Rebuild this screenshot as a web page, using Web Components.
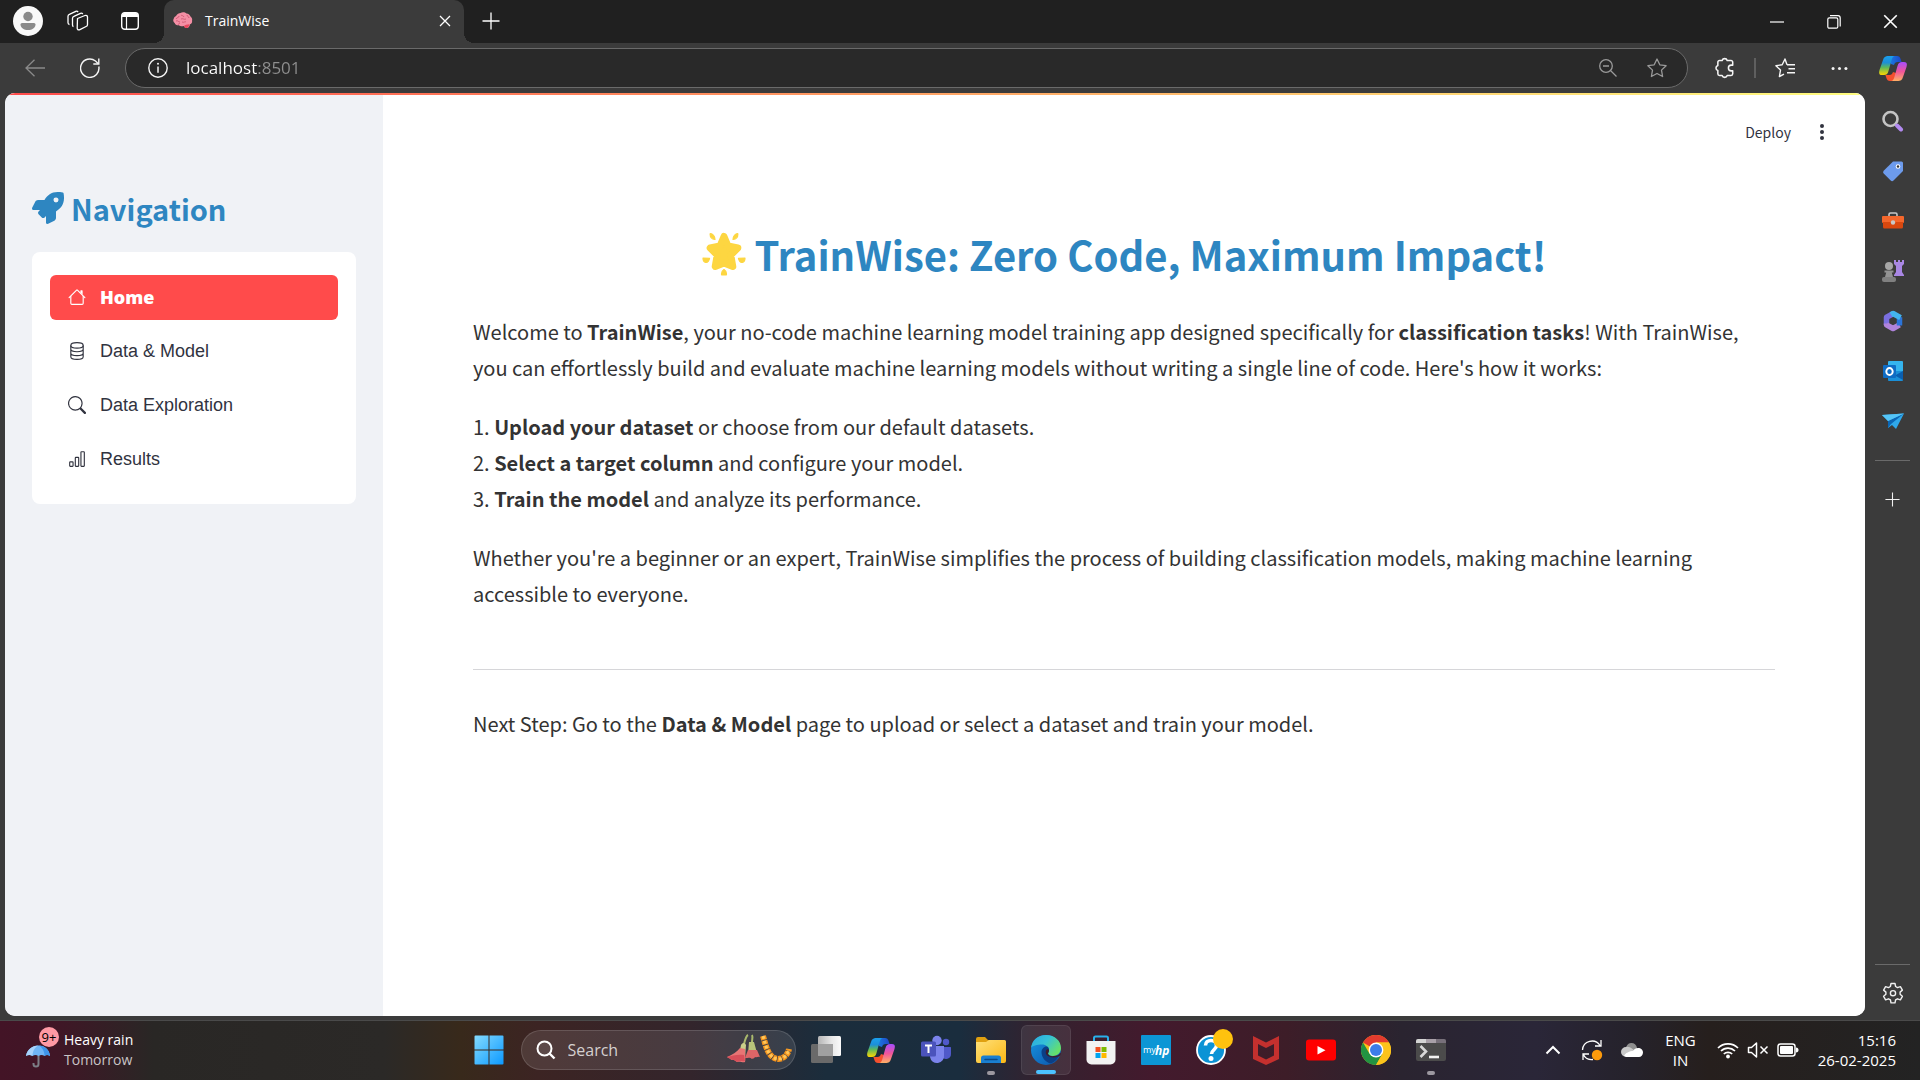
<!DOCTYPE html>
<html lang="en">
<head>
<meta charset="utf-8">
<title>TrainWise</title>
<style>
html, body { margin: 0; height: 100%; overflow: hidden; background: #3b3b3b; }
body { font-family: "Open Sans", "Noto Sans", sans-serif; }
</style>
</head>
<body>
<desktop-screen></desktop-screen>
<script>
const COPILOT = `<defs>
<linearGradient id="a" x1="0" y1="0" x2="0" y2="1"><stop offset="0" stop-color="#1aa0ee"/><stop offset=".35" stop-color="#1d8fd8"/><stop offset=".6" stop-color="#5cb85c"/><stop offset="1" stop-color="#ffd500"/></linearGradient>
<linearGradient id="b" x1="0" y1="0" x2="0" y2="1"><stop offset="0" stop-color="#a64dff"/><stop offset=".5" stop-color="#f0559a"/><stop offset="1" stop-color="#ffb066"/></linearGradient>
<linearGradient id="c" x1="0" y1="0" x2="1" y2="0"><stop offset="0" stop-color="#1b86e6"/><stop offset="1" stop-color="#1d47c8"/></linearGradient></defs>
<path fill="url(#c)" d="M8 1h10c2 0 3 1 3.600 3l1 3h-4c-2 0-3 1-3.600 3l-3-1z"/>
<path fill="#f4502e" d="M20 26H11c-2 0-3-1-3.600-3l-1-3h4c2 0 3-1 3.600-3l3 1z"/>
<path fill="url(#a)" d="M9 1h7c-2 0-2.800 2-3.400 4L9.500 16c-.8 3-2.300 4-4.500 4H3c-3 0-3.300-2-2.500-5L4 5c.9-3 2.500-4 5-4z"/>
<path fill="url(#b)" d="M19 26h-7c2 0 2.800-2 3.400-4l3.100-11c.8-3 2.300-4 4.500-4h2c3 0 3.300 2 2.500 5L24 22c-.9 3-2.500 4-5 4z"/>`;

/* name: [viewBox, markup]; outline icons take the current text colour */
const ICONS = {
  profile: ['0 0 30 30', '<circle cx="15" cy="15" r="15" fill="#f9f9f9"/><circle cx="15" cy="10.500" r="4.700" fill="#8a8a8a"/><path d="M9 17h12a1.500 1.500 0 0 1 1.500 1.500C22.500 22 19 24 15 24s-7.500-2-7.500-5.500A1.500 1.500 0 0 1 9 17z" fill="#8a8a8a"/>'],
  workspaces: ['0 0 22 22', '<g fill="none" stroke="currentColor" stroke-width="1.300" stroke-linejoin="round"><path d="M10.500 8.500 18 5.500c1.300-.4 2.500.3 2.500 1.600v7.400c0 1-.5 1.700-1.400 2l-6.700 3.300c-1.200.4-2.200-.3-2.200-1.500z"/><path d="M6.500 16.500c-.8-.2-1-.8-1-1.600V8.300c0-1 .5-1.700 1.400-2L13.500 3.300c1-.4 1.800 0 2.300.7M2.500 14.500c-.9-.2-1.500-.8-1.500-1.800V6.300c0-1 .5-1.700 1.400-2L8.800 1.300c1-.4 1.800 0 2.300.7"/></g>'],
  tabactions: ['0 0 18 18', '<rect x=".7" y=".7" width="16.600" height="16.600" rx="3" fill="none" stroke="currentColor" stroke-width="1.400"/><path d="M1 5V3.500A2.500 2.500 0 0 1 3.500 1h11A2.500 2.500 0 0 1 17 3.500V5z" fill="currentColor"/><path d="M5.500 5v12" stroke="currentColor" stroke-width="1.200"/>'],
  brain: ['0 0 20 17', '<path d="M3 4c1-2 3-3 4.500-3C9 0 12 0 13.500 1.500c2 0 3.500 1.500 4 3 1.500 1 2 3 1.500 4.500.5 1.500-.5 3-2 3.300-.2 2-1.500 4-3.500 3.700-1 0-2-.8-2.500-2C9 14.500 7 14.300 6 13.300 4 13.500 2 12.500 1.700 11 .2 10-.2 8 .8 6.500 1 5.500 2 4.500 3 4z" fill="#f48fa5"/><path d="M11 14c1-1 3-1.700 5.500-1.700-.2 2-1.500 4-3.500 3.700-1 0-2-.8-2-2z" fill="#e8485f"/><path d="M3 7c1-2 3-1 3-3m1 6c-2 0-2-2-4-1m5-6c1 1 2 0 3 2m-3 2c2-1 3 1 5 0m1-4c0 2 2 1 2 3m-7 4c2 1 3-1 4 0m-8 3c0-1 1-1 2-2" fill="none" stroke="#c9536d" stroke-width=".8"/>'],
  close: ['0 0 12 12', '<path d="M1 1l10 10M11 1L1 11" stroke="currentColor" stroke-width="1.300"/>'],
  plus: ['0 0 18 18', '<path d="M9 .5v17M.5 9h17" stroke="currentColor" stroke-width="1.300"/>'],
  minimize: ['0 0 14 14', '<path d="M0 7h14" stroke="currentColor" stroke-width="1.200"/>'],
  restore: ['0 0 14 14', '<rect x=".8" y="2.800" width="10" height="10.400" rx="1.500" fill="none" stroke="currentColor" stroke-width="1.200"/><path d="M3 .7h8A2.300 2.300 0 0 1 13.200 3v8.500" fill="none" stroke="currentColor" stroke-width="1.200"/>'],
  back: ['0 0 20 18', '<path d="M20 9H1M9.500.8 1 9l8.500 8.200" fill="none" stroke="currentColor" stroke-width="1.300"/>'],
  reload: ['0 0 20 20', '<path d="M18.800 8.500A9.200 9.200 0 1 1 15.500 3l2.800 2.700" fill="none" stroke="currentColor" stroke-width="1.400"/><path d="M18.800.5V6h-5.500" fill="none" stroke="currentColor" stroke-width="1.400"/>'],
  info: ['0 0 20 20', '<circle cx="10" cy="10" r="9.200" fill="none" stroke="currentColor" stroke-width="1.400"/><path d="M10 8.500v6.300" stroke="currentColor" stroke-width="1.500"/><circle cx="10" cy="5.700" r="1" fill="currentColor"/>'],
  zoomout: ['0 0 18 18', '<circle cx="7" cy="7" r="6.300" fill="none" stroke="currentColor" stroke-width="1.300"/><path d="M11.500 11.500l6 6M4 7h6" stroke="currentColor" stroke-width="1.300"/>'],
  star: ['0 0 20 20', '<path d="M10 1l2.800 5.800 6.300.9-4.600 4.400 1.100 6.400L10 15.500l-5.600 3 1.100-6.400L.9 7.700l6.300-.9z" fill="none" stroke="currentColor" stroke-width="1.300" stroke-linejoin="round"/>'],
  puzzle: ['0 0 20 20', '<path d="M3.500 4.700A1.500 1.500 0 0 1 5 3.200h2.400a2.400 2.400 0 0 1 4.600 0h3.500A1.500 1.500 0 0 1 17 4.700v2.700h-1.300a2.600 2.600 0 0 0 0 5.200H17v2.700a1.500 1.500 0 0 1-1.500 1.500H12a2.400 2.400 0 0 1-4.600 0H5a1.500 1.500 0 0 1-1.500-1.500v-3a2.400 2.400 0 0 1 0-4.600z" fill="none" stroke="currentColor" stroke-width="1.400" stroke-linejoin="round"/>'],
  favorites: ['0 0 20 20', '<path d="M12 6.700 10 1 7.200 6.800l-6.300.9 4.600 4.400-1.100 6.400L9 16.200M12 6.700h8M13.500 10.700H20M12 14.700h8M12.500 6.700h-.5" fill="none" stroke="currentColor" stroke-width="1.400" stroke-linejoin="round"/>'],
  more: ['0 0 18 18', '<circle cx="2.200" cy="9" r="1.600" fill="currentColor"/><circle cx="9" cy="9" r="1.600" fill="currentColor"/><circle cx="15.800" cy="9" r="1.600" fill="currentColor"/>'],
  copilot: ['0 0 28 27', COPILOT],
  kebab: ['0 0 6 18', '<g fill="#31333f"><circle cx="3" cy="3" r="2"/><circle cx="3" cy="9" r="2"/><circle cx="3" cy="15" r="2"/></g>'],
  lens: ['0 0 22 22', '<circle cx="8.500" cy="9" r="7" fill="none" stroke="#c4c4c4" stroke-width="2.600"/><path d="M15 15.500l4 4" stroke="#b28af0" stroke-width="4" stroke-linecap="round"/>'],
  tag: ['0 0 22 22', '<path d="M11 1.500h8.500A1.500 1.500 0 0 1 21 3v8L11.500 20.500a2 2 0 0 1-2.800 0l-7-7a2 2 0 0 1 0-2.800z" fill="#6d9bec"/><circle cx="16" cy="6.500" r="2.300" fill="#fff"/><circle cx="16" cy="6.500" r="1.200" fill="#333"/>'],
  toolbox: ['0 0 22 22', '<path d="M7 7V4.500A1.500 1.500 0 0 1 8.500 3h5A1.500 1.500 0 0 1 15 4.500V7" fill="none" stroke="#c8c8c8" stroke-width="1.600"/><rect x="0" y="6" width="22" height="7" rx="1" fill="#f4672c"/><path d="M1 12h20v5a1.500 1.500 0 0 1-1.500 1.500h-17A1.500 1.500 0 0 1 1 17z" fill="#d9480f"/><circle cx="11" cy="12.500" r="2.200" fill="#c8c8c8"/>'],
  chess: ['0 0 22 22', '<path d="M12 0h2v2h2V0h2v2h2V0h2v4l-2 2v6l2 3v1H12v-1l2-3V6l-2-2z" fill="#a987e4"/><circle cx="7" cy="6" r="4" fill="#a6a6a6"/><path d="M2.500 10.500h9v2H9.800L11 17H3l1.200-4.500H2.500z" fill="#939393"/><rect x="0" y="17" width="14" height="5" rx="2" fill="#808080"/>'],
  m365: ['0 0 22 22', '<g fill="none" stroke-width="5.500" stroke-linejoin="round"><path d="M11.500 3.500l-7 3.700v7.600" stroke="#7a6fe0"/><path d="M4.500 13.500v1.300L11 18.500l6.500-3.700" stroke="#b083dc"/><path d="M17.500 15.500V7.200" stroke="#2b74da"/><path d="M18.500 7.700 11 3.500l-2 1.200" stroke="#43b4ee"/></g>'],
  outlook: ['0 0 22 22', '<rect x="6" y="1" width="15" height="12" rx="1" fill="#35b4ee"/><path d="M6 11l15 0v9a1 1 0 0 1-1 1H7a1 1 0 0 1-1-1z" fill="#1a8fd8"/><path d="M21 11v9l-8-4.500z" fill="#0a5fb0"/><rect x="1" y="5" width="13" height="13" rx="1" fill="#0f6cc4"/><ellipse cx="7.500" cy="11.500" rx="3.200" ry="3.500" fill="none" stroke="#fff" stroke-width="1.900"/>'],
  plane: ['0 0 22 22', '<path d="M0 5 22 3.500 14 19l-4-4-4 3V11z" fill="#2fa8ea"/><path d="M6 11 22 3.500 9 14l-3 4z" fill="#0b66b5"/><path d="M0 5l22-1.500L6 11z" fill="#55c5f7"/>'],
  gear: ['0 0 22 22', '<path d="M9 1.500h4l.6 3 1.900 1.100 2.900-1 2 3.500-2.300 2v2.200l2.300 2-2 3.500-2.900-1-1.900 1.100-.6 3H9l-.6-3-1.900-1.100-2.900 1-2-3.500 2.300-2v-2.200l-2.300-2 2-3.500 2.900 1 1.900-1.100z" fill="none" stroke="currentColor" stroke-width="1.400" stroke-linejoin="round"/><circle cx="11" cy="11.200" r="2.600" fill="none" stroke="currentColor" stroke-width="1.400"/>'],
  rocket: ['0 0 512 512', '<path fill="currentColor" d="M505.120 19.094c-1.189-5.531-6.658-11-12.207-12.188C460.716 0 435.507 0 410.407 0 307.175 0 245.269 55.203 199.052 128H94.838c-16.348.016-35.557 11.875-42.887 26.484L2.516 253.297A28.400 28.400 0 0 0 0 264a24 24 0 0 0 24.006 24h103.810l-22.474 22.469c-11.365 11.361-12.996 32.258 0 45.250l50.904 50.906c11.156 11.188 32.156 13.156 45.277 0l22.475-22.469V488a24 24 0 0 0 24.006 24 28.559 28.559 0 0 0 10.707-2.516l98.728-49.391c14.629-7.297 26.508-26.500 26.508-42.859V312.797c72.598-46.313 128.035-108.406 128.035-211.094.093-25.203.093-50.406-6.862-82.609zM384.040 168a40 40 0 1 1 40.010-40 40.023 40.023 0 0 1-40.010 40z"/>'],
  house: ['0 0 16 16', '<path fill="currentColor" d="M2 13.500V7h1v6.500a.5.5 0 0 0 .5.5h9a.5.5 0 0 0 .5-.5V7h1v6.500a1.500 1.500 0 0 1-1.500 1.500h-9A1.500 1.500 0 0 1 2 13.500zm11-11V6l-2-2V2.500a.5.5 0 0 1 .5-.5h1a.5.5 0 0 1 .5.5z"/><path fill="currentColor" d="M7.293 1.500a1 1 0 0 1 1.414 0l6.647 6.646a.5.5 0 0 1-.708.708L8 2.207 1.354 8.854a.5.5 0 1 1-.708-.708z"/>'],
  database: ['0 0 16 16', '<g fill="none" stroke="currentColor"><ellipse cx="8" cy="3" rx="5.500" ry="2.400"/><path d="M2.500 3v10c0 1.300 2.500 2.400 5.500 2.400s5.500-1.100 5.500-2.400V3M2.500 6.300c0 1.300 2.500 2.400 5.500 2.400s5.500-1.100 5.500-2.400M2.500 9.700c0 1.300 2.500 2.400 5.500 2.400s5.500-1.100 5.500-2.400"/></g>'],
  search: ['0 0 16 16', '<path fill="currentColor" d="M11.742 10.344a6.500 6.500 0 1 0-1.397 1.398h-.001c.03.040.062.078.098.115l3.850 3.850a1 1 0 0 0 1.415-1.414l-3.850-3.850a1.007 1.007 0 0 0-.115-.1zM12 6.500a5.500 5.500 0 1 1-11 0 5.500 5.500 0 0 1 11 0z"/>'],
  chart: ['0 0 16 16', '<path fill="currentColor" d="M4 11H2v3h2v-3zm5-4H7v7h2V7zm5-5v12h-2V2h2zm-2-1a1 1 0 0 0-1 1v12a1 1 0 0 0 1 1h2a1 1 0 0 0 1-1V2a1 1 0 0 0-1-1h-2zM6 7a1 1 0 0 1 1-1h2a1 1 0 0 1 1 1v7a1 1 0 0 1-1 1H7a1 1 0 0 1-1-1V7zm-5 4a1 1 0 0 1 1-1h2a1 1 0 0 1 1 1v3a1 1 0 0 1-1 1H2a1 1 0 0 1-1-1v-3z"/>'],
  glow: ['0 0 44 44', '<g fill="#fdd641" stroke="#fdd641" stroke-linejoin="round"><path stroke-width="7" d="M22 4.500l4 9.500 9.800 2-7 7 2 11.500L22 31l-8.800 3.500 2-11.500-7-7 9.800-2z"/><path stroke-width="1" d="M10.500 1.500c2 0 4 2.500 4 6-2.300-.3-4.300-2.300-4-6zM33.500 1.500c-2 0-4 2.500-4 6 2.300-.3 4.300-2.300 4-6zM4.500 26l5.500.2c-.5 2.800-1.700 4.500-3.200 4.300-1.500-.3-2.300-2.500-2.300-4.500zM39.500 26l-5.500.2c.5 2.800 1.700 4.500 3.200 4.300 1.500-.3 2.300-2.500 2.300-4.500zM22 37.500c1.300 1 2.300 3.300 2 5.500h-4c-.3-2.200.7-4.500 2-5.500z" transform="translate(-4.400 0) scale(1.200 1)"/></g>'],
  umbrella: ['0 0 24 24', '<path d="M12.500 11v9a2.500 2.500 0 0 1-5 0v-1" fill="none" stroke="#7c7f86" stroke-width="2"/><path d="M0 12C1 6 6 1.500 12.500 1.500S23.500 6 24 12c-2-1.300-4-1.300-5.500 0-2-1.500-4-1.500-6 0-2-1.500-4-1.500-6 0-2-1.300-4.500-1.300-6.500 0z" fill="#6fb5f5"/><path d="M12.500 1.500c-4 2-6 6-6 10.500-2-1.300-4.500-1.300-6.500 0C1 6 6 1.500 12.500 1.500z" fill="#a7d3fb"/><path d="M12.500 1.500c4 2 6 6 6 10.500 1.500-1.300 3.500-1.300 5.500 0-.5-6-5-10.500-11.500-10.500z" fill="#3f95ea"/>'],
  start: ['0 0 30 30', '<defs><linearGradient id="w" gradientUnits="userSpaceOnUse" x1="0" y1="0" x2="30" y2="30"><stop offset="0" stop-color="#86dcff"/><stop offset="1" stop-color="#0a98ff"/></linearGradient></defs><path fill="url(#w)" d="M1.500.5h13v14H.5v-13a1 1 0 0 1 1-1zM15.500.5h13a1 1 0 0 1 1 1v13h-14zM.5 15.500h14v14h-13a1 1 0 0 1-1-1zM15.500 15.500h14v13a1 1 0 0 1-1 1h-13z"/>'],
  find: ['0 0 20 20', '<circle cx="8.500" cy="8.500" r="7" fill="#ffffff14" stroke="currentColor" stroke-width="2"/><path d="M13.500 13.500l5 5" stroke="currentColor" stroke-width="2.400"/>'],
  flowers: ['0 0 66 34', '<path d="M22 2c-2 1-3 5-4 9M26 2c1 2 0 5 0 7" stroke="#a9b86c" stroke-width="2" fill="none"/><path d="M15 12c2-3 4-2 5 0l-1 12-7 3z" fill="#c9cf8a"/><path d="M14 15c-3 4-8 7-13 9 2 2 4 1 4 3 3-1 4 1 6 2 3-1 6 1 8 0 1-3 0-9 0-13z" fill="#e87575"/><path d="M1 24c5-1 10-3 17-2l1 6c-3 1-5-1-8 1-2-1-3-3-6-2 0-2-2-1-4-3z" fill="#d84f5a"/><path d="M23 9h5l3 11-9 1z" fill="#b7c37a"/><path d="M22 17h9l3 7c-2-1-3 1-5 0-1 2-2 1-3 2-2-2-4-1-7-1z" fill="#dd6567"/><path d="M37 3c3 10 5 22 15 23 6 0 10-5 11-10" fill="none" stroke="#f6951d" stroke-width="6" stroke-dasharray="4 .8"/><path d="M37 3c3 10 5 22 15 23 6 0 10-5 11-10" fill="none" stroke="#ffc75a" stroke-width="3" stroke-dasharray="3 2"/>'],
  taskview: ['0 0 30 30', '<rect x="0" y="9" width="22" height="19" rx="1.500" fill="#6a6a6a"/><defs><linearGradient id="t"><stop offset="0" stop-color="#b5b5b5"/><stop offset=".6" stop-color="#e8e8e8"/><stop offset="1" stop-color="#fafafa"/></linearGradient></defs><rect x="7" y="1" width="23" height="20" rx="1.500" fill="url(#t)"/><path d="M7 9h15v12H8.500A1.500 1.500 0 0 1 7 19.500z" fill="#a0a0a0"/>'],
  teams: ['0 0 30 30', '<circle cx="25" cy="7" r="3.200" fill="#5059c9"/><path d="M21 12h8.500a.5.500 0 0 1 .5.500V19a5 5 0 0 1-9 3z" fill="#5059c9"/><circle cx="16" cy="5.500" r="4.700" fill="#7b83eb"/><path d="M9 11h14v9a7 7 0 0 1-14 2z" fill="#7b83eb"/><rect x="0" y="6.500" width="15" height="15" rx="1.500" fill="#4b53bc"/><path d="M4 10.500h7M7.500 10.500V18" stroke="#fff" stroke-width="2"/>'],
  files: ['0 0 30 30', '<path d="M0 4a2 2 0 0 1 2-2h7l3 3h10v8H0z" fill="#e0a010"/><defs><linearGradient id="f" x1="0" y1="0" x2="1" y2="1"><stop offset="0" stop-color="#ffe07a"/><stop offset="1" stop-color="#fbb814"/></linearGradient></defs><path d="M0 7h10l3-2h15.500A1.500 1.500 0 0 1 30 6.500V26a2 2 0 0 1-2 2H2a2 2 0 0 1-2-2z" fill="url(#f)"/><path d="M5 28v-5a2.500 2.500 0 0 1 2.500-2.500h15A2.500 2.500 0 0 1 25 23v5z" fill="#1a7fd0"/><path d="M9 24.500h12" stroke="#0c4a86" stroke-width="1.500" stroke-linecap="round"/>'],
  edge: ['0 0 30 30', '<defs><linearGradient id="e" x1="0" y1="0" x2="1" y2=".6"><stop offset="0" stop-color="#2aa7de"/><stop offset=".5" stop-color="#35c1d8"/><stop offset="1" stop-color="#66e06a"/></linearGradient><linearGradient id="g" x1="0" y1="0" x2="1" y2="1"><stop offset="0" stop-color="#1797e2"/><stop offset="1" stop-color="#0c52a8"/></linearGradient></defs><circle cx="15" cy="15" r="15" fill="url(#g)"/><path d="M0 13C1 5 7 0 15 0c9 0 15 6 15 13 0 5-4 8-8 8-3 0-5-1-5-2.500 0-1 1-1.500 1-3.500 0-3-3-5.500-7-5.500C6 9.500 1 11 0 13z" fill="url(#e)"/><path d="M10.500 17c0-3 2.500-5.500 5-5.500 1.500 0 2.500 1.500 2.500 3.500s-1 2.500-1 3.500c0 2 3 3.500 6 3.500 2 0 3.500-.5 5-1.500-1 3-4 6.500-8 8-5.500-1-9.500-6-9.500-11.500z" fill="#0b3f86"/><path d="M18 15c-.2 2-1 2.500-1 3.500 0 2 3 3 6 2.500 3 0 5-.8 6.500-3.500l.5 1.500c-.6 1.500-1.500 2.500-2.500 2.500-5 2-11 .5-12.500-2.500C14 16 16 13 18 15z" fill="#3f1e2d"/>'],
  store: ['0 0 30 30', '<path d="M8 7V3a1.500 1.500 0 0 1 1.500-1.500h11A1.500 1.500 0 0 1 22 3v4" fill="none" stroke="#29b0ea" stroke-width="2"/><path d="M.5 6h29v18.500a5 5 0 0 1-5 5h-19a5 5 0 0 1-5-5z" fill="#f2f2f2"/><path d="M9.500 12h5v5h-5z" fill="#f25022"/><path d="M15.500 12h5v5h-5z" fill="#7fba00"/><path d="M9.500 18h5v5h-5z" fill="#00a4ef"/><path d="M15.500 18h5v5h-5z" fill="#ffb900"/>'],
  myhp: ['0 0 30 30', '<rect width="30" height="30" rx="1" fill="#0c96d5"/><text x="2" y="18" font-family="Open Sans, sans-serif" font-size="9" fill="#fff">my</text><text x="14" y="20" font-family="Open Sans, sans-serif" font-size="12" font-weight="700" font-style="italic" fill="#fff">hp</text>'],
  help: ['0 0 30 30', '<circle cx="15" cy="15" r="14" fill="#0b93d5" stroke="#fff" stroke-width="1.800"/><path d="M9.500 10.500C9.500 7 12 5.500 15 5.500s5.500 2 5.500 5c0 4-5 4.500-5 8.500" fill="none" stroke="#fff" stroke-width="3.600"/><circle cx="15" cy="23.500" r="2.500" fill="#fff"/>'],
  mcafee: ['0 0 30 30', '<path d="M2 1l13 6.500L28 1v23l-13 6-13-6zm5 8v11.500l8 4 8-4V9l-8 4z" fill="#c4302e" fill-rule="evenodd"/>'],
  youtube: ['0 0 30 30', '<rect x="0" y="4.500" width="30" height="21" rx="3" fill="#f00"/><path d="M11.500 11v8.500l8-4.250z" fill="#fff"/>'],
  chrome: ['0 0 30 30', '<circle cx="15" cy="15" r="15" fill="#fbc116"/><path d="M15 15 2 7.500A15 15 0 0 1 28 7.500H15z" fill="#e33b2e"/><path d="M2 7.500A15 15 0 0 0 15 30l6.500-11.200L15 15 8.500 18.700z" fill="#229342"/><path d="M28 7.500H15v7.500l6.500 3.800L15 30A15 15 0 0 0 28 7.500z" fill="#fcc31b"/><circle cx="15" cy="15" r="7.400" fill="#fff"/><circle cx="15" cy="15" r="6" fill="#3c7de8"/>'],
  terminal: ['0 0 30 30', '<rect y="4" width="30" height="22" rx="2" fill="#4b4b4b"/><path d="M0 8V6a2 2 0 0 1 2-2h8v4z" fill="#d4d4d4"/><path d="M10 4h10v4H10z" fill="#a8a0a8"/><path d="M20 4h8a2 2 0 0 1 2 2v2H20z" fill="#77707a"/><path d="M4.500 11l5.500 5.500L4.500 22" fill="none" stroke="#d8d8d8" stroke-width="2.600"/><path d="M13 22h10" stroke="#f2f2f2" stroke-width="2.600"/>'],
  chevron: ['0 0 16 16', '<path d="M1.500 11.500 8 5l6.500 6.500" fill="none" stroke="currentColor" stroke-width="2"/>'],
  sync: ['0 0 22 22', '<path d="M1.500 11A9.500 9.500 0 0 1 19 6.500M20 1v6h-6M2 21v-6h6M12 20.500C7 21 3.500 18.500 2.500 15.500" fill="none" stroke="currentColor" stroke-width="1.300"/><circle cx="16" cy="16" r="5.200" fill="#fc9a0c"/>'],
  cloud: ['0 0 22 22', '<path d="M5 10a5.500 5.500 0 0 1 11-1l1 6H5z" fill="#8f8f8f"/><path d="M5 8a5 5 0 0 0-5 5c0 2.500 2 4.500 4.500 4.500H12L15 12c-3-1-6-5-10-4z" fill="#c9c9c9"/><path d="M3 17c1-3 6-5 9-5 1-2 3-3 5-3 3 0 5 2 5 4.500S20 18 18 18H5z" fill="#fff"/>'],
  wifi: ['0 0 22 22', '<g fill="none" stroke="currentColor" stroke-width="1.700"><path d="M1 9a14.200 14.200 0 0 1 20 0M4 12a10 10 0 0 1 14 0M6.800 15a6 6 0 0 1 8.400 0"/></g><circle cx="11" cy="17.500" r="1.900" fill="currentColor"/>'],
  mute: ['0 0 22 22', '<path d="M1.500 8.500h3l5-4.500v14l-5-4.500h-3z" fill="none" stroke="currentColor" stroke-width="1.500" stroke-linejoin="round"/><path d="M13.500 7.500l7 7M20.500 7.500l-7 7" stroke="currentColor" stroke-width="1.500"/>'],
  battery: ['0 0 22 22', '<rect x="1" y="5" width="17" height="12" rx="2.500" fill="none" stroke="currentColor" stroke-width="1.500"/><rect x="3" y="7" width="13" height="8" rx="1" fill="currentColor"/><path d="M19 8.500c1.700 0 2.500 1 2.500 2.500s-.8 2.500-2.500 2.500z" fill="currentColor"/>']
};

class UiIcon extends HTMLElement {
  connectedCallback() {
    const [box, art] = ICONS[this.getAttribute('name')];
    const w = this.getAttribute('w'), h = this.getAttribute('h') || w;
    this.attachShadow({ mode: 'open' }).innerHTML =
      `<style>:host{display:block;flex:none}svg{display:block}</style><svg width="${w}" height="${h}" viewBox="${box}" aria-hidden="true">${art}</svg>`;
  }
}
customElements.define('ui-icon', UiIcon);

const RESET = `*{box-sizing:border-box} button,input{font:inherit;color:inherit;background:none;border:0;padding:0;margin:0;outline:0} a{color:inherit;text-decoration:none}`;
function component(tag, html) {
  const tpl = document.createElement('template');
  tpl.innerHTML = html.replace('<style>', '<style>' + RESET);
  customElements.define(tag, class extends HTMLElement {
    constructor() {
      super();
      this.attachShadow({ mode: 'open' }).append(tpl.content.cloneNode(true));
    }
  });
}

component('icon-button', `<style>
:host{display:block;flex:none;width:var(--w,55px);height:var(--h,50px)}
button{display:flex;align-items:center;justify-content:center;width:100%;height:100%;position:relative;border-radius:6px}
:host([active]) button{background:#ffffff14;border:1px solid #ffffff14}
::slotted(.badge){position:absolute;top:4px;right:6px;width:20px;height:20px;border-radius:50%;background:#ffc20e}
:host([running]) button::after,:host([active]) button::after{content:"";position:absolute;bottom:0;width:8px;height:4px;border-radius:2px;background:#9c98a0}
:host([active]) button::after{width:20px;background:#4cc2ff}
</style><button type="button"><slot></slot></button>`);

component('tab-strip', `<style>
:host{display:flex;height:43px;background:#202020;color:#fff}
.lead{display:flex;align-items:center;width:164px;padding:0 13px 2px;gap:24px}
.lead ui-icon+ui-icon+ui-icon{margin-left:8px}
.tab{position:relative;display:flex;align-items:center;gap:12px;width:300px;padding:0 13px 2px 9px;background:#3b3b3b;border-radius:10px 10px 0 0;font-size:14px}
.tab::before,.tab::after{content:"";position:absolute;bottom:0;width:10px;height:10px}
.tab::before{left:-10px;background:radial-gradient(circle at 0 0,#202020 10px,#3b3b3b 10px)}
.tab::after{right:-10px;background:radial-gradient(circle at 100% 0,#202020 10px,#3b3b3b 10px)}
.tab span{flex:1}
.window{display:flex;margin-left:auto;padding-right:1px}
icon-button{--w:57px;--h:43px}
.add{--w:53px;--h:41px}
</style>
<div class="lead"><ui-icon name="profile" w="30"></ui-icon><ui-icon name="workspaces" w="22"></ui-icon><ui-icon name="tabactions" w="18"></ui-icon></div>
<div class="tab"><ui-icon name="brain" w="20" h="17"></ui-icon><span>TrainWise</span><ui-icon name="close" w="12"></ui-icon></div>
<icon-button class="add"><ui-icon name="plus" w="18"></ui-icon></icon-button>
<div class="window"><icon-button><ui-icon name="minimize" w="14"></ui-icon></icon-button><icon-button><ui-icon name="restore" w="14"></ui-icon></icon-button><icon-button><ui-icon name="close" w="15"></ui-icon></icon-button></div>`);

component('address-bar', `<style>
:host{display:flex;align-items:center;height:50px;background:#3b3b3b;color:#f5f5f5}
icon-button{--w:55px;--h:40px}
.off{color:#8a8a8a;--w:70px}
.field{flex:1;display:flex;align-items:center;gap:18px;height:40px;padding:0 20px 0 22px;background:#292929;border:1px solid #6a6a6a;border-radius:20px}
input{flex:1;min-width:0;height:30px;padding-bottom:2px;font-size:17px;background:linear-gradient(90deg,#fff 71px,#8f8f8f 71px);-webkit-background-clip:text;background-clip:text;color:transparent}
.tools{display:flex;gap:30px;color:#9a9a9a;align-items:center}
.right{display:flex;align-items:center;width:232px;padding-left:10px}
.right icon-button{--w:54px}
i{width:2px;height:20px;background:#5f5f5f;margin:0 2px}
</style>
<icon-button class="off"><ui-icon name="back" w="20" h="18"></ui-icon></icon-button>
<icon-button style="--w:40px;margin-right:15px"><ui-icon name="reload" w="20"></ui-icon></icon-button>
<div class="field"><ui-icon name="info" w="20"></ui-icon><input type="text" aria-label="Address" value="localhost:8501" spellcheck="false"><div class="tools"><ui-icon name="zoomout" w="18"></ui-icon><ui-icon name="star" w="20"></ui-icon></div></div>
<div class="right"><icon-button><ui-icon name="puzzle" w="22"></ui-icon></icon-button><i></i><icon-button><ui-icon name="favorites" w="20"></ui-icon></icon-button><icon-button><ui-icon name="more" w="17"></ui-icon></icon-button><icon-button><ui-icon name="copilot" w="28" h="27"></ui-icon></icon-button></div>`);

component('edge-sidebar', `<style>
:host{display:flex;flex-direction:column;align-items:center;width:55px;padding:3px 0 2px;color:#f0f0f0}
hr{width:35px;height:1px;border:0;margin:14px 0 13px;background:#6a6a6a}
.end{margin-top:auto;display:flex;flex-direction:column;align-items:center}
.end hr{margin:0 0 3px}
</style>
<icon-button><ui-icon name="lens" w="22"></ui-icon></icon-button><icon-button><ui-icon name="tag" w="22"></ui-icon></icon-button><icon-button><ui-icon name="toolbox" w="22"></ui-icon></icon-button><icon-button><ui-icon name="chess" w="22"></ui-icon></icon-button><icon-button><ui-icon name="m365" w="22"></ui-icon></icon-button><icon-button><ui-icon name="outlook" w="22"></ui-icon></icon-button><icon-button><ui-icon name="plane" w="22"></ui-icon></icon-button>
<hr><icon-button><ui-icon name="plus" w="15"></ui-icon></icon-button>
<div class="end"><hr><icon-button><ui-icon name="gear" w="22"></ui-icon></icon-button></div>`);

component('nav-item', `<style>
:host{display:block}
a{display:flex;align-items:center;gap:14px;height:45px;padding:0 18px;border-radius:6px;color:#31333f;font:18px/27px "Liberation Sans",sans-serif}
::slotted(ui-icon){margin-bottom:2px}
:host([selected]) a{background:#ff4b4b;color:#fff;font-family:"Open Sans",sans-serif;font-weight:800}
</style><a href="#"><slot name="icon"></slot><slot></slot></a>`);

component('app-nav', `<style>
:host{display:block;width:378px;padding:96px 27px 0;background:#f0f2f6;font-family:"Noto Sans CJK JP",sans-serif}
h2{display:flex;align-items:center;gap:7px;height:38px;margin:0;color:#2e86c1;font-size:29px;line-height:38px}
nav{display:flex;flex-direction:column;gap:9px;margin-top:25px;padding:23px 18px 22px;background:#fff;border-radius:8px}
</style>
<h2><ui-icon name="rocket" w="32"></ui-icon>Navigation</h2>
<nav>
<nav-item selected><ui-icon slot="icon" name="house" w="18"></ui-icon>Home</nav-item>
<nav-item><ui-icon slot="icon" name="database" w="18"></ui-icon>Data &amp; Model</nav-item>
<nav-item><ui-icon slot="icon" name="search" w="18"></ui-icon>Data Exploration</nav-item>
<nav-item><ui-icon slot="icon" name="chart" w="18"></ui-icon>Results</nav-item>
</nav>`);

component('home-page', `<style>
:host{display:block;flex:1;min-width:0;background:#fff;color:#333;font:20px/36px "Noto Sans CJK JP",sans-serif}
header{display:flex;justify-content:flex-end;align-items:center;gap:28px;height:78px;padding-right:40px;color:#31333f}
header button{font-size:14px;line-height:20px}
article{padding:58px 90px 0}
h1{display:flex;justify-content:center;align-items:center;gap:9px;margin:0;color:#2e86c1;font-size:40px;line-height:50px}
p{margin:0}
.intro{margin-top:35px}
ol,.more{margin:23px 0 0}
ol{padding:0;list-style:none}
hr{height:1px;margin:57px 0 36px;border:0;background:#d6d6d9}
</style>
<header><button type="button">Deploy</button><button type="button" aria-label="Menu"><ui-icon name="kebab" w="6" h="18"></ui-icon></button></header>
<article>
<h1><ui-icon name="glow" w="44"></ui-icon>TrainWise: Zero Code, Maximum Impact!</h1>
<p class="intro">Welcome to <b>TrainWise</b>, your no-code machine learning model training app designed specifically for <b>classification tasks</b>! With TrainWise, you can effortlessly build and evaluate machine learning models without writing a single line of code. Here's how it works:</p>
<ol><li>1. <b>Upload your dataset</b> or choose from our default datasets.</li><li>2. <b>Select a target column</b> and configure your model.</li><li>3. <b>Train the model</b> and analyze its performance.</li></ol>
<p class="more">Whether you're a beginner or an expert, TrainWise simplifies the process of building classification models, making machine learning accessible to everyone.</p>
<hr>
<p>Next Step: Go to the <b>Data &amp; Model</b> page to upload or select a dataset and train your model.</p>
</article>`);

component('page-frame', `<style>
:host{display:flex;flex:1;min-width:0;position:relative;margin:0 0 4px 5px;border-radius:10px;overflow:hidden;background:#fff}
.progress{position:absolute;inset:0 0 auto;height:2px;background:linear-gradient(90deg,#ff4b4b,#fffd80)}
</style><app-nav></app-nav><home-page></home-page><div class="progress"></div>`);

component('task-bar', `<style>
:host{display:grid;grid-template-columns:1fr auto 1fr;align-items:center;height:60px;color:#fff;font-size:15px;line-height:20px;box-shadow:inset 0 1px #4a4a4a;
background:linear-gradient(90deg,#431426 0,#401626 3%,#292725 8%,#2b2927 20%,#38291b 24%,#3c2423 28%,#33252c 36%,#1b2d3c 43%,#1a2d3e 50%,#33222f 54%,#431a2d 60%,#3d1d28 67%,#2a2430 73%,#2a2638 80%,#25222b 85%,#261f1d 89%,#232323 100%)}
.weather{display:flex;align-items:center;gap:14px;padding-left:26px;font-size:14px}
.pic{position:relative;padding-top:12px}
.pic b{position:absolute;top:-5px;left:13px;width:20px;height:20px;border-radius:50%;background:#ff99a4;color:#000;font-weight:400;font-size:13px;line-height:20px;text-align:center}
.weather div+div span{display:block;color:#c9c4c6}.weather div+div span:first-child{color:#fff}
.center{display:flex;align-items:center}
label{display:flex;align-items:center;width:275px;height:40px;margin:0 3px 0 4px;padding:0 3px 0 14px;gap:12px;background:#ffffff1a;border:1px solid #ffffff24;border-radius:20px}
input{flex:1;min-width:0;font-size:16px}
input::placeholder{color:#d5d0d0;opacity:1}
.tray{display:flex;align-items:center;justify-content:flex-end;padding-right:24px;text-align:right}
.lang{text-align:center;margin:0 21px 0 13px}
.status{display:flex;gap:8px;margin-right:19px}
</style>
<div class="weather"><div class="pic"><ui-icon name="umbrella" w="24"></ui-icon><b>9+</b></div><div><span>Heavy rain</span><span>Tomorrow</span></div></div>
<div class="center">
<icon-button><ui-icon name="start" w="30"></ui-icon></icon-button>
<label><ui-icon name="find" w="20"></ui-icon><input type="search" aria-label="Search" placeholder="Search"><ui-icon name="flowers" w="66" h="34"></ui-icon></label>
<icon-button><ui-icon name="taskview" w="30"></ui-icon></icon-button>
<icon-button><ui-icon name="copilot" w="28" h="27"></ui-icon></icon-button>
<icon-button><ui-icon name="teams" w="30"></ui-icon></icon-button>
<icon-button running><ui-icon name="files" w="30"></ui-icon></icon-button>
<icon-button active style="--w:50px;margin:0 3px 0 2px"><ui-icon name="edge" w="30"></ui-icon></icon-button>
<icon-button><ui-icon name="store" w="30"></ui-icon></icon-button>
<icon-button><ui-icon name="myhp" w="30"></ui-icon></icon-button>
<icon-button><ui-icon name="help" w="30"></ui-icon><span class="badge"></span></icon-button>
<icon-button><ui-icon name="mcafee" w="30"></ui-icon></icon-button>
<icon-button><ui-icon name="youtube" w="30"></ui-icon></icon-button>
<icon-button><ui-icon name="chrome" w="30"></ui-icon></icon-button>
<icon-button running><ui-icon name="terminal" w="30"></ui-icon></icon-button>
</div>
<div class="tray">
<icon-button style="--w:38px"><ui-icon name="chevron" w="16"></ui-icon></icon-button>
<icon-button style="--w:40px"><ui-icon name="sync" w="22"></ui-icon></icon-button>
<icon-button style="--w:40px"><ui-icon name="cloud" w="22"></ui-icon></icon-button>
<div class="lang">ENG<br>IN</div>
<div class="status"><ui-icon name="wifi" w="22"></ui-icon><ui-icon name="mute" w="22"></ui-icon><ui-icon name="battery" w="22"></ui-icon></div>
<div>15:16<br>26-02-2025</div>
</div>`);

component('desktop-screen', `<style>
:host{display:flex;flex-direction:column;height:100vh;background:#3b3b3b}
main{display:flex;flex:1;min-height:0}
</style><tab-strip></tab-strip><address-bar></address-bar><main><page-frame></page-frame><edge-sidebar></edge-sidebar></main><task-bar></task-bar>`);
</script>
</body>
</html>
